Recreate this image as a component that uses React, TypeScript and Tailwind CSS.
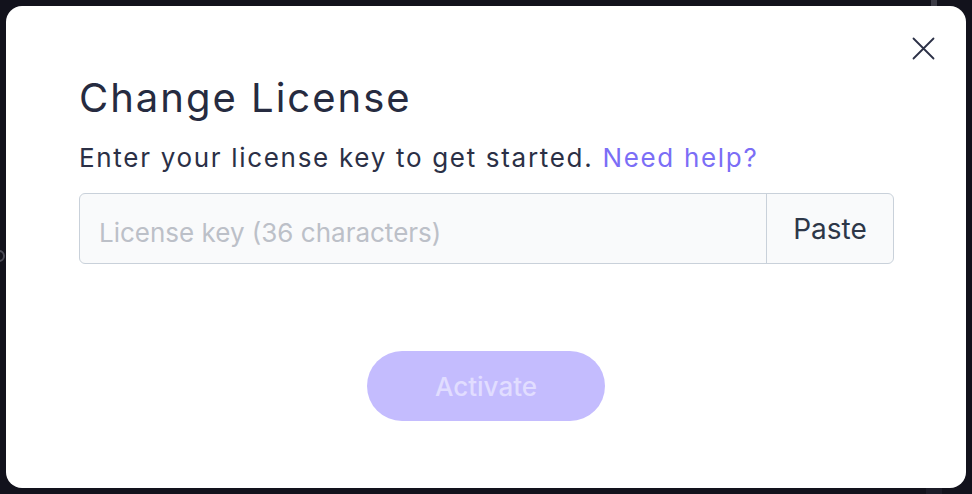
export default function App() {
  return (
    <div className="relative h-[494px] w-[972px] overflow-hidden bg-[#12121c] p-[6px] font-['Inter',sans-serif]">
      {/* bits of the page behind the dialog */}
      <div className="absolute left-[931px] top-0 h-[6px] w-[6px] bg-[#3b3b46]" />
      <div className="absolute bottom-0 left-[926px] h-[6px] w-[16px] bg-[#1c1c28]" />
      <div className="absolute left-[-7px] top-[250px] h-[12px] w-[12px] rounded-full border-2 border-[#4a4a55]" />

      <div className="relative flex h-full w-full flex-col items-start rounded-[16px] bg-white px-[73px]">
        <button className="absolute left-[906px] top-[31px] text-[#2b3046]">
          <svg width="23" height="23" viewBox="0 0 23 23" fill="none" stroke="currentColor" strokeWidth="1.8" strokeLinecap="round">
            <path d="M1.5 1.5L21.5 21.5M21.5 1.5L1.5 21.5" />
          </svg>
        </button>

        <h2 className="mt-[68px] text-[40px] leading-[48px] tracking-[0.05em] text-[#262b40]">
          Change License
        </h2>
        <p className="mt-[19px] text-[26px] leading-[34px] tracking-[0.065em] text-[#2b3046]">
          Enter your license key to get started.{' '}
          <a className="text-[#7b6ef6]">Need help?</a>
        </p>

        <div className="mt-[18px] flex h-[71px] w-[815px] overflow-hidden rounded-[6px] border border-[#c9d1da] bg-[#f9fafb]">
          <input
            className="min-w-0 flex-1 bg-transparent px-[19px] pt-[7px] text-[26px] text-[#2b3046] outline-none placeholder:text-[#bcc0c8]"
            placeholder="License key (36 characters)"
          />
          <button className="w-[127px] border-l border-[#c9d1da] text-[28px] text-[#2d3748]">
            Paste
          </button>
        </div>

        <div className="mt-[87px] flex w-full justify-center">
          <button className="h-[70px] w-[238px] rounded-full bg-[#c4bcfe] text-[26px] font-medium text-[#e1ddff]">
            Activate
          </button>
        </div>
      </div>
    </div>
  )
}
